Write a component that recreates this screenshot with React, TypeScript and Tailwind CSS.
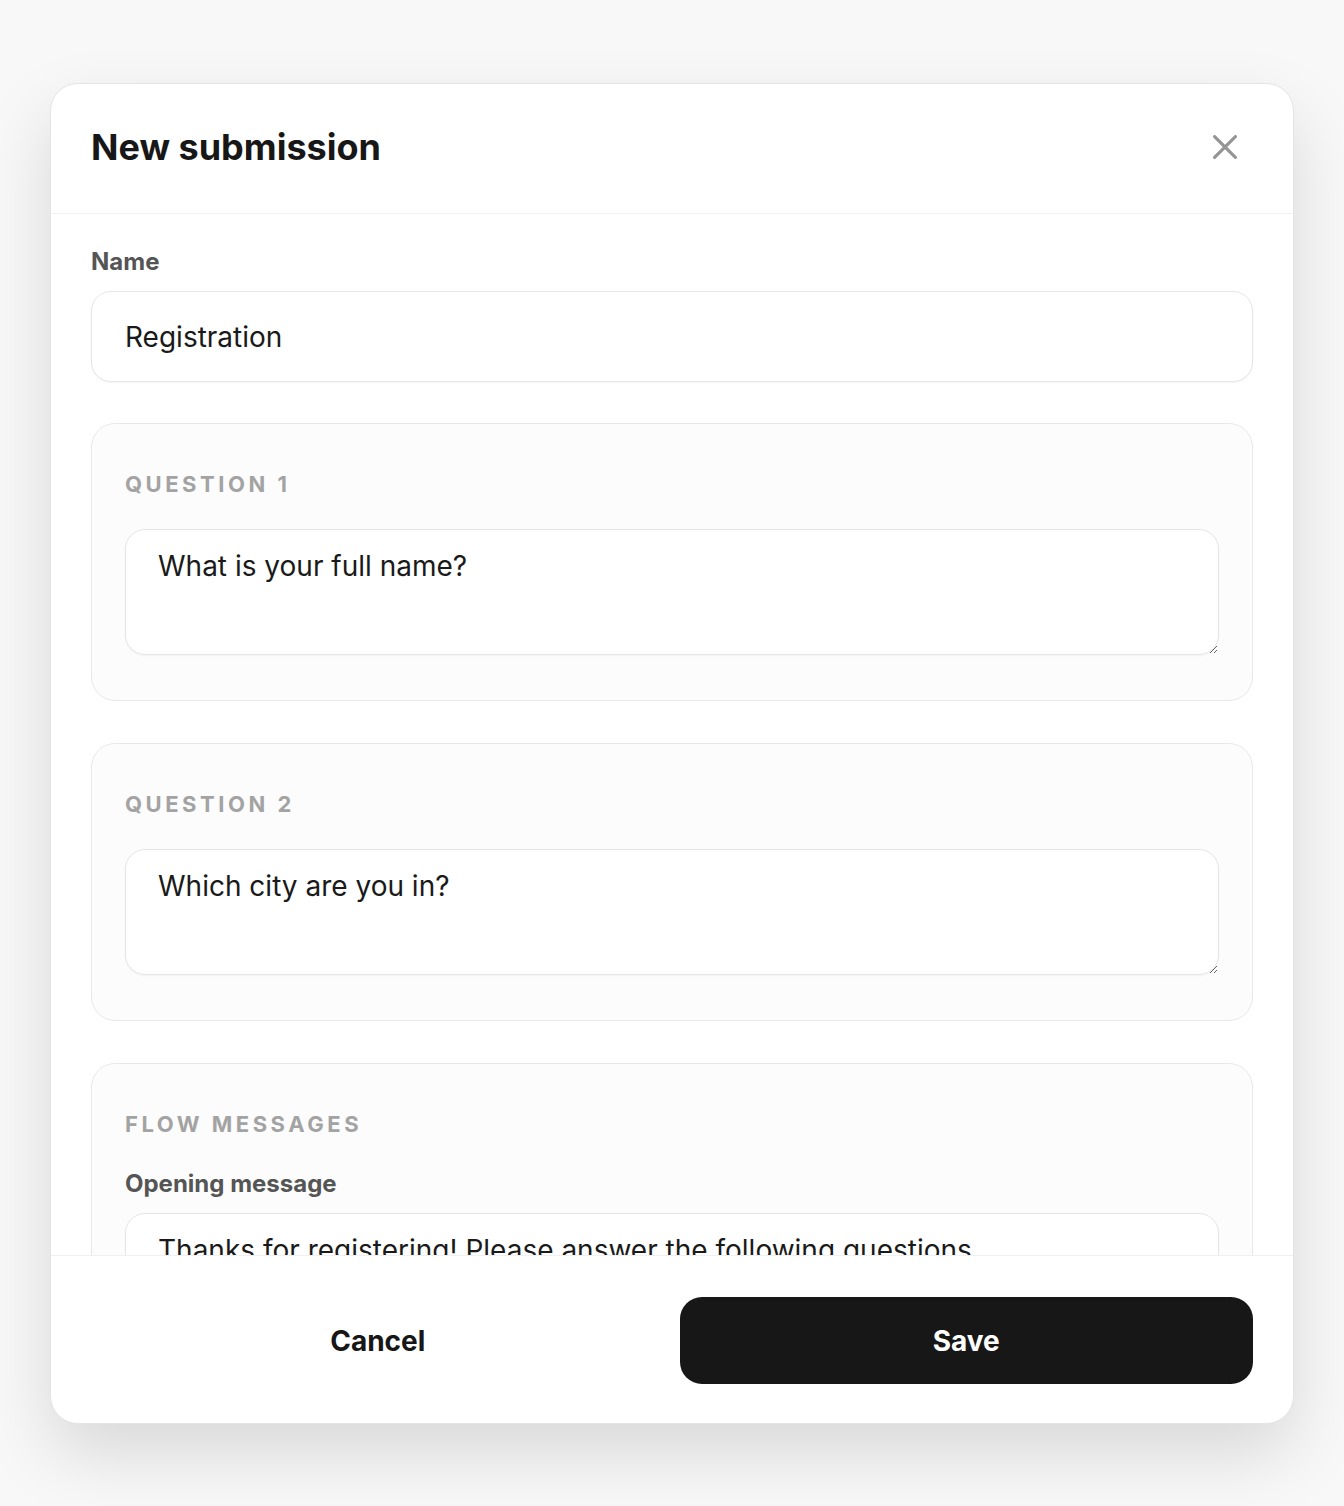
import React from "react";

function Card({ label, value }: { label: string; value: string }) {
  return (
    <div className="rounded-[24px] border border-[#e8e8e8] bg-[#fcfcfc] px-[33px] pt-[46px] pb-[45px]">
      <div className="mb-[31px] text-[22px] font-bold leading-[28px] tracking-[0.16em] text-[#a3a3a3]">
        {label}
      </div>
      <textarea
        defaultValue={value}
        className="block h-[126px] w-full rounded-[20px] border border-[#e6e6e6] bg-white px-[32px] py-[16px] text-[28px] leading-[40px] text-[#1a1a1a] shadow-[0_1px_2px_rgba(0,0,0,0.04)] outline-none"
      />
    </div>
  );
}

export default function App() {
  return (
    <div
      className="h-[1506px] overflow-hidden bg-[#f8f8f8] px-[50px] pt-[83px]"
      style={{ fontFamily: "Inter, 'Noto Sans', sans-serif" }}
    >
      <div className="flex h-[1341px] flex-col overflow-hidden rounded-[28px] border border-[#e4e4e4] bg-white shadow-[0_30px_70px_rgba(0,0,0,0.13)]">
        <div className="flex h-[130px] shrink-0 items-center justify-between border-b border-[#f0f0f0] px-[40px] pb-[3px]">
          <h1 className="text-[36px] font-bold leading-none text-[#171717]">New submission</h1>
          <button className="mr-[8px] flex h-[40px] w-[40px] items-center justify-center text-[#959595]">
            <svg width="24" height="24" viewBox="0 0 24 24" fill="none" stroke="currentColor" strokeWidth="3.2" strokeLinecap="round">
              <path d="M1.6 1.6L22.4 22.4M22.4 1.6L1.6 22.4" />
            </svg>
          </button>
        </div>

        <div className="flex-1 overflow-hidden px-[40px] pt-[34px]">
          <div className="mb-[15px] text-[24px] font-bold leading-[28px] text-[#555555]">Name</div>
          <input
            defaultValue="Registration"
            className="block h-[91px] w-full rounded-[20px] border border-[#e6e6e6] bg-white px-[33px] text-[28px] text-[#1a1a1a] shadow-[0_1px_2px_rgba(0,0,0,0.04)] outline-none"
          />

          <div className="mt-[41px] flex flex-col gap-[42px]">
            <Card label="QUESTION 1" value="What is your full name?" />
            <Card label="QUESTION 2" value="Which city are you in?" />
            <div className="rounded-[24px] border border-[#e8e8e8] bg-[#fcfcfc] px-[33px] pt-[46px] pb-[45px]">
              <div className="mb-[32px] text-[22px] font-bold leading-[28px] tracking-[0.16em] text-[#a3a3a3]">
                FLOW MESSAGES
              </div>
              <div className="mb-[15px] text-[24px] font-bold leading-[28px] text-[#555555]">
                Opening message
              </div>
              <textarea
                defaultValue="Thanks for registering! Please answer the following questions."
                className="block h-[126px] w-full rounded-[20px] border border-[#e6e6e6] bg-white px-[32px] py-[16px] text-[28px] leading-[40px] text-[#1a1a1a] shadow-[0_1px_2px_rgba(0,0,0,0.04)] outline-none"
              />
            </div>
          </div>
        </div>

        <div className="grid shrink-0 grid-cols-2 gap-[15px] border-t border-[#f0f0f0] px-[40px] pt-[41px] pb-[39px]">
          <button className="h-[87px] rounded-[22px] text-[28px] font-bold text-[#171717]">Cancel</button>
          <button className="h-[87px] rounded-[22px] bg-[#171717] text-[28px] font-bold text-white">Save</button>
        </div>
      </div>
    </div>
  );
}
